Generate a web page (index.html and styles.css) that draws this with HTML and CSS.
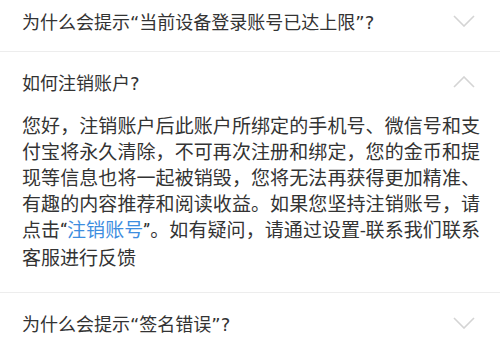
FILE: index.html
```html
<!DOCTYPE html>
<html lang="zh-CN">
<head>
<meta charset="utf-8">
<link rel="stylesheet" href="styles.css">
</head>
<body>
<div class="list">
  <div class="item">
    <div class="q">
      <span class="title">为什么会提示<span class="tq">“</span>当前设备登录账号已达上限<span class="tq">”?</span></span>
      <svg class="chev" width="22" height="12" viewBox="0 0 22 12"><polyline points="1,1 11,11 21,1" fill="none" stroke="#d4d4d4" stroke-width="1.6"/></svg>
    </div>
  </div>
  <div class="item">
    <div class="q">
      <span class="title">如何注销账户<span class="tq">?</span></span>
      <svg class="chev" width="22" height="12" viewBox="0 0 22 12"><polyline points="1,11 11,1 21,11" fill="none" stroke="#d4d4d4" stroke-width="1.6"/></svg>
    </div>
    <div class="a">您好，注销账户后此账户所绑定的手机号、微信号和支付宝将永久清除，不可再次注册和绑定，您的金币和提现等信息也将一起被销毁，您将无法再获得更加精准、有趣的内容推荐和阅读收益。如果您坚持注销账号，请点击<span class="lq">“</span><span class="link">注销账号</span><span class="lq">”</span>。如有疑问，请通过设置<span class="lq">-</span>联系我们联系客服进行反馈</div>
  </div>
  <div class="item">
    <div class="q">
      <span class="title">为什么会提示<span class="tq">“</span>签名错误<span class="tq">”?</span></span>
      <svg class="chev" width="22" height="12" viewBox="0 0 22 12"><polyline points="1,1 11,11 21,1" fill="none" stroke="#d4d4d4" stroke-width="1.6"/></svg>
    </div>
  </div>
</div>
</body>
</html>
```
FILE: styles.css
```css
html, body {
  margin: 0;
  padding: 0;
  background: #ffffff;
}
body {
  font-family: "Noto Sans CJK SC", "Noto Sans", sans-serif;
  color: #333333;
  overflow: hidden;
}
.list {
  margin-top: -9px;
}
.item {
  border-bottom: 1px solid #ededed;
}
.q {
  height: 60px;
  display: flex;
  align-items: center;
  justify-content: space-between;
  padding: 0 25px 0 22px;
}
.title {
  font-size: 18px;
  color: #333333;
}
.tq {
  font-family: "DejaVu Sans", sans-serif;
}
.lq {
  font-family: "Roboto", "Noto Sans", sans-serif;
}
.chev {
  display: block;
}
.a {
  width: 458px;
  padding: 0 20px 22px 22px;
  font-size: 19px;
  line-height: 26px;
  text-align: justify;
  color: #333333;
}
.link {
  color: #3e8ee0;
}
```
